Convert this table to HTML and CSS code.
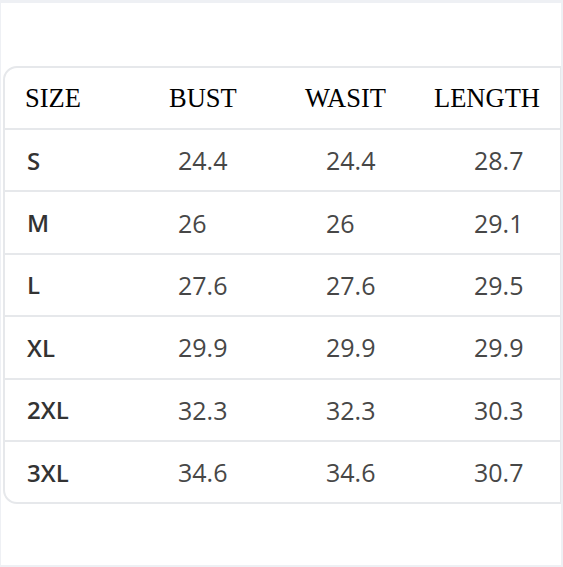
FILE: index.html
```html
<!DOCTYPE html>
<html>
<head>
<meta charset="utf-8">
<link rel="stylesheet" href="styles.css">
</head>
<body>
<div class="frame">
  <div class="table">
    <div class="row head">
      <div class="c c1">SIZE</div>
      <div class="c c2">BUST</div>
      <div class="c c3">WASIT</div>
      <div class="c c4">LENGTH</div>
    </div>
    <div class="row">
      <div class="c c1 sz">S</div><div class="c c2">24.4</div><div class="c c3">24.4</div><div class="c c4">28.7</div>
    </div>
    <div class="row">
      <div class="c c1 sz">M</div><div class="c c2">26</div><div class="c c3">26</div><div class="c c4">29.1</div>
    </div>
    <div class="row">
      <div class="c c1 sz">L</div><div class="c c2">27.6</div><div class="c c3">27.6</div><div class="c c4">29.5</div>
    </div>
    <div class="row">
      <div class="c c1 sz">XL</div><div class="c c2">29.9</div><div class="c c3">29.9</div><div class="c c4">29.9</div>
    </div>
    <div class="row">
      <div class="c c1 sz">2XL</div><div class="c c2">32.3</div><div class="c c3">32.3</div><div class="c c4">30.3</div>
    </div>
    <div class="row last">
      <div class="c c1 sz">3XL</div><div class="c c2">34.6</div><div class="c c3">34.6</div><div class="c c4">30.7</div>
    </div>
  </div>
</div>
</body>
</html>
```
FILE: styles.css
```css
html, body {
  margin: 0;
  padding: 0;
}
body {
  background: #eef0f4;
  width: 563px;
  height: 567px;
  overflow: hidden;
}
.frame {
  margin: 3px 2px 0 1px;
  height: 562px;
  background: #ffffff;
  padding-top: 63px;
  padding-left: 2px;
  box-sizing: border-box;
}
.table {
  border: 2px solid #e6e8eb;
  border-right-width: 1px;
  border-radius: 14px 0 0 14px;
  background: #fff;
}
.row {
  display: grid;
  grid-template-columns: 164px 136px 129px 1fr;
  align-items: center;
  height: 60.4px;
  border-bottom: 2px solid #e6e8eb;
  font-family: "Open Sans", sans-serif;
  font-size: 25px;
  color: #474747;
}
.row.last {
  border-bottom: none;
}
.row.head {
  height: 60px;
  font-family: "Liberation Serif", "Times New Roman", serif;
  font-size: 26.5px;
  color: #000;
}
.c { white-space: nowrap; }
.row .c1 { padding-left: 22px; }
.row .c2 { padding-left: 9px; }
.row .c3 { padding-left: 21px; }
.row .c4 { padding-left: 40px; }
.row.head .c1 { padding-left: 20px; }
.row.head .c2, .row.head .c3, .row.head .c4 { padding-left: 0; }
.sz {
  font-weight: 600;
  font-size: 24px;
  color: #333;
}
```
